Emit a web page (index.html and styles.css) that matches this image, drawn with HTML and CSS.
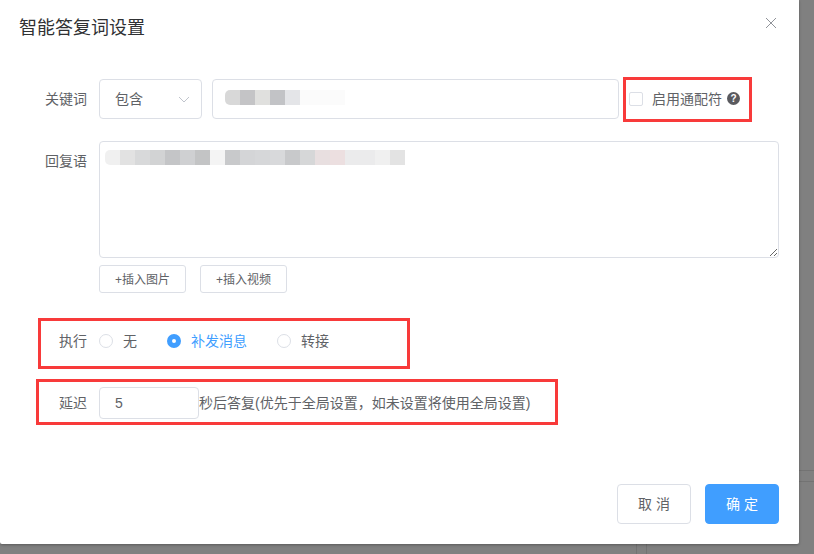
FILE: index.html
```html
<!DOCTYPE html>
<html lang="zh-CN">
<head>
    <title>智能答复词设置</title>
    <meta http-equiv="Content-Type" content="text/html; charset=utf-8"/>
    <link rel="stylesheet" href="styles.css">
</head>
<body>
<div class="backdrop">
    <div class="page-line line-h1"></div>
    <div class="page-line line-h2"></div>
    <div class="page-line line-v1"></div>
    <div class="page-line line-v2"></div>

    <div class="dialog">
        <div class="dialog-header">
            <span class="dialog-title">智能答复词设置</span>
            <svg class="close-icon" width="12" height="12" viewBox="0 0 12 12">
                <path d="M1 1 L11 11 M11 1 L1 11" stroke="#909399" stroke-width="1" fill="none"/>
            </svg>
        </div>

        <div class="form">
            <div class="form-row keyword-row">
                <label class="form-label">关键词</label>
                <div class="select">
                    <span>包含</span>
                    <svg width="12" height="7" viewBox="0 0 12 7">
                        <path d="M1 1 L6 6 L11 1" stroke="#c0c4cc" stroke-width="1" fill="none"/>
                    </svg>
                </div>
                <div class="input keyword-input"><div class="mosaic mosaic-keyword"></div></div>
                <div class="checkbox"></div>
                <span class="checkbox-label">启用通配符</span>
                <span class="help-icon">?</span>
            </div>

            <div class="form-row reply-row">
                <label class="form-label">回复语</label>
                <div class="reply-box">
                    <div class="textarea"><div class="mosaic mosaic-reply"></div></div>
                    <div class="insert-buttons">
                        <button class="btn-small">+插入图片</button>
                        <button class="btn-small">+插入视频</button>
                    </div>
                </div>
            </div>

            <div class="form-row action-row">
                <label class="form-label">执行</label>
                <div class="radio-item"><span class="radio"></span><span>无</span></div>
                <div class="radio-item checked"><span class="radio"></span><span>补发消息</span></div>
                <div class="radio-item"><span class="radio"></span><span>转接</span></div>
            </div>

            <div class="form-row delay-row">
                <label class="form-label">延迟</label>
                <div class="input delay-input">5</div>
                <span class="delay-text">秒后答复(优先于全局设置，如未设置将使用全局设置)</span>
            </div>
        </div>

        <div class="dialog-footer">
            <button class="btn">取 消</button>
            <button class="btn btn-primary">确 定</button>
        </div>

        <!-- red annotation boxes drawn over the form -->
        <div class="mark mark-keyword"></div>
        <div class="mark mark-action"></div>
        <div class="mark mark-delay"></div>
    </div>
</div>
</body>
</html>
```

FILE: styles.css
```css
html, body {
    margin: 0;
    height: 100%;
}

body {
    font-family: "Liberation Sans", "Noto Sans CJK SC", sans-serif;
    font-size: 14px;
    color: #606266;
}

.backdrop {
    position: relative;
    width: 814px;
    height: 554px;
    background: #808080;
    overflow: hidden;
}

.page-line {
    position: absolute;
    background: #737373;
}

.line-h1,
.line-h2 {
    left: 799px;
    width: 15px;
    height: 1px;
}

.line-h1 {
    top: 470px;
}

.line-h2 {
    top: 481px;
}

.line-v1,
.line-v2 {
    top: 544px;
    width: 1px;
    height: 10px;
}

.line-v1 {
    left: 636px;
}

.line-v2 {
    left: 646px;
}

.dialog {
    position: relative;
    display: flex;
    flex-direction: column;
    box-sizing: border-box;
    width: 799px;
    height: 544px;
    background: #fff;
    border-radius: 0 0 2px 2px;
    box-shadow: 0 1px 3px rgba(0, 0, 0, .3);
}

.dialog-header {
    display: flex;
    justify-content: space-between;
    padding: 15px 22px 0 19px;
    height: 64px;
    box-sizing: border-box;
}

.dialog-title {
    font-size: 18px;
    line-height: 26px;
    color: #303133;
}

.close-icon {
    margin-top: 2px;
}

.form {
    padding: 15px 20px 0 0;
}

.form-row {
    display: flex;
    align-items: center;
}

.form-label {
    flex: none;
    padding-right: 12px;
    box-sizing: border-box;
    width: 99px;
    text-align: right;
}

.form-row .form-label,
.select span,
.checkbox-label,
.radio-item span:last-child,
.delay-text {
    padding-bottom: 2px;
}

.keyword-row {
    height: 40px;
}

.select {
    display: flex;
    align-items: center;
    justify-content: space-between;
    box-sizing: border-box;
    width: 103px;
    height: 40px;
    padding: 0 11px 0 15px;
    border: 1px solid #dcdfe6;
    border-radius: 4px;
}

.input {
    box-sizing: border-box;
    height: 40px;
    padding: 0 15px;
    border: 1px solid #dcdfe6;
    border-radius: 4px;
}

.keyword-input {
    display: flex;
    align-items: center;
    width: 407px;
    margin-left: 10px;
    padding-left: 12px;
}

.mosaic {
    height: 15px;
}

.mosaic-keyword {
    width: 120px;
    margin-bottom: 3px;
    border-radius: 5px 0 0 5px;
    background: linear-gradient(90deg,
        #d8d8d8 0 15px, #c4c4c6 15px 30px, #e0e0de 30px 45px,
        #c2c3c6 45px 60px, #e4e5e8 60px 75px, #fbfbfb 75px 120px);
}

.checkbox {
    box-sizing: border-box;
    width: 14px;
    height: 14px;
    margin-left: 10px;
    border: 1px solid #dcdfe6;
    border-radius: 2px;
}

.checkbox-label {
    margin-left: 9px;
}

.help-icon {
    width: 13px;
    height: 13px;
    margin-left: 5px;
    margin-bottom: 1px;
    border-radius: 50%;
    background: #5a5a5f;
    color: #fff;
    font-size: 10px;
    font-weight: bold;
    line-height: 13px;
    text-align: center;
}

.reply-row {
    align-items: flex-start;
    margin-top: 22px;
}

.reply-row .form-label {
    line-height: 40px;
}

.reply-box {
    flex: 1;
}

.textarea {
    box-sizing: border-box;
    height: 117px;
    padding: 8px 5px;
    border: 1px solid #dcdfe6;
    border-radius: 4px;
    overflow: auto;
    resize: vertical;
}

.mosaic-reply {
    width: 300px;
    border-radius: 5px 0 0 5px;
    background: linear-gradient(90deg,
        #f0f0f0 0 15px, #e2e2e2 15px 30px, #d8d9da 30px 45px, #d2d3d4 45px 60px,
        #c4c5c7 60px 75px, #cfd0d2 75px 90px, #c3c4c5 90px 105px, #f4f4f4 105px 120px,
        #c8c9cb 120px 135px, #d4d5d7 135px 150px, #d6d7d9 150px 165px, #d8d9db 165px 180px,
        #c8c9cb 180px 195px, #d6d7d8 195px 210px, #e8dfe0 210px 225px, #ecdfe0 225px 240px,
        #ebebec 240px 270px, #f0f0f0 270px 285px, #e3e3e3 285px 300px);
}

.insert-buttons {
    display: flex;
    gap: 14px;
    margin-top: 7px;
}

.btn-small {
    box-sizing: border-box;
    width: 87px;
    height: 28px;
    padding: 0 0 2px;
    background: #fff;
    border: 1px solid #dcdfe6;
    border-radius: 3px;
    color: #606266;
    font-family: inherit;
    font-size: 12px;
}

.action-row {
    height: 40px;
    margin-top: 28px;
}

.radio-item {
    display: flex;
    align-items: center;
    gap: 10px;
    margin-right: 30px;
}

.radio {
    box-sizing: border-box;
    width: 14px;
    height: 14px;
    border: 1px solid #dcdfe6;
    border-radius: 50%;
}

.radio-item.checked {
    color: #409eff;
}

.radio-item.checked .radio {
    border: 5px solid #409eff;
    background: #fff;
}

.delay-row {
    height: 32px;
    margin-top: 26px;
}

.delay-input {
    width: 100px;
    height: 32px;
    line-height: 30px;
}

.dialog-footer {
    display: flex;
    justify-content: flex-end;
    gap: 14px;
    margin-top: auto;
    padding: 0 20px 20px 0;
}

.btn {
    box-sizing: border-box;
    width: 74px;
    height: 40px;
    padding: 0 0 2px;
    background: #fff;
    border: 1px solid #dcdfe6;
    border-radius: 4px;
    color: #606266;
    font-family: inherit;
    font-size: 14px;
}

.btn-primary {
    background: #409eff;
    border-color: #409eff;
    color: #fff;
}

.mark {
    position: absolute;
    box-sizing: border-box;
    border: 3px solid #f83a3a;
}

.mark-keyword {
    left: 623px;
    top: 77px;
    width: 129px;
    height: 45px;
}

.mark-action {
    left: 38px;
    top: 318px;
    width: 372px;
    height: 51px;
}

.mark-delay {
    left: 36px;
    top: 379px;
    width: 522px;
    height: 46px;
}
```
